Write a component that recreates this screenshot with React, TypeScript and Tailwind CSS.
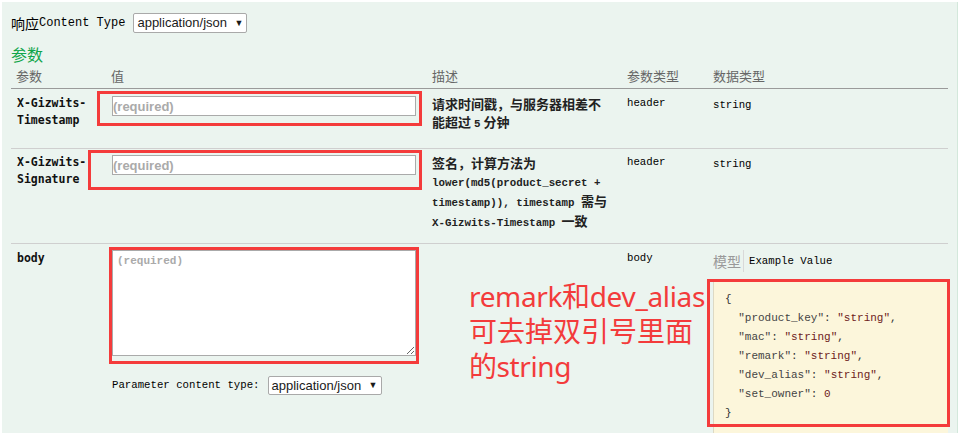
import React from "react";

function Sel({ className }: { className: string }) {
  return (
    <div
      className={
        "flex items-center justify-between border border-[#a9a9a9] bg-white rounded-[2px] pl-[3px] pr-[3px] text-[13px] font-['Liberation_Sans',Arial,sans-serif] text-[#1a1a1a] " +
        className
      }
    >
      <span>application/json</span>
      <span className="text-[9px] leading-none">▼</span>
    </div>
  );
}

function M({ children }: { children: React.ReactNode }) {
  return <span className="font-['Liberation_Mono',monospace] text-[10.8px]">{children}</span>;
}

const mono = "font-['Liberation_Mono',monospace]";
const nameCls =
  "pl-[6px] font-['DejaVu_Sans_Mono',monospace] font-bold text-[11.5px] leading-[17px] text-[#111]";
const descCls =
  "pl-[6px] font-['Noto_Sans_CJK_SC',sans-serif] font-bold text-[13px] leading-[18px] text-[#222] whitespace-nowrap";
const smallMono = "pl-[6px] font-['Liberation_Mono',monospace] text-[10.7px] leading-[17px] text-black";

function Input() {
  return (
    <input
      readOnly
      placeholder="(required)"
      className="block w-[304px] h-[20px] border border-[#aaa] bg-white px-0 text-[13px] font-bold font-['Liberation_Sans',Arial,sans-serif] placeholder:text-[#aaa] outline-none"
    />
  );
}

export default function App() {
  return (
    <div className="relative w-[962px] h-[433px] bg-white overflow-hidden font-['Noto_Sans','Noto_Sans_CJK_SC',sans-serif]">
      <div className="ml-[2px] mt-[2px] w-[956px] h-[431px] bg-[#ebf4ef] border-r border-[#d3e8db] pl-[9px] pt-[11px]">
        {/* response content type */}
        <div className="flex items-center h-[20px] text-black">
          <span className="text-[14px] font-['Noto_Sans_CJK_SC',sans-serif]">响应</span>
          <span className={mono + " text-[12px]"}>Content Type</span>
          <Sel className="ml-[8px] w-[114px] h-[20px]" />
        </div>

        <h4 className="mt-[11px] h-[20px] leading-[20px] text-[16px] text-[#10a54a] font-['Noto_Sans_CJK_SC',sans-serif]">
          参数
        </h4>

        <div className="w-[937px]">
          {/* header */}
          <div className="grid grid-cols-[94px_321px_195px_86px_241px] h-[25px] items-center border-b border-[#9a9a9a] text-[13px] text-[#666] font-['Noto_Sans_CJK_SC',sans-serif]">
            <div className="pl-[5px]">参数</div>
            <div className="pl-[6px]">值</div>
            <div className="pl-[6px]">描述</div>
            <div className="pl-[6px]">参数类型</div>
            <div className="pl-[6px]">数据类型</div>
          </div>

          {/* row 1 */}
          <div className="grid grid-cols-[94px_321px_195px_86px_241px] h-[60px] border-b border-[#cfcfcf] pt-[6px]">
            <div className={nameCls}>
              X-Gizwits-
              <br />
              Timestamp
            </div>
            <div className="pl-[7px] pt-px">
              <Input />
            </div>
            <div className={descCls}>
              <div>请求时间戳，与服务器相差不</div>
              <div>
                能超过 <M>5</M> 分钟
              </div>
            </div>
            <div className={smallMono}>header</div>
            <div className={smallMono + " pt-[2px]"}>string</div>
          </div>

          {/* row 2 */}
          <div className="grid grid-cols-[94px_321px_195px_86px_241px] h-[95px] border-b border-[#cfcfcf] pt-[5px]">
            <div className={nameCls}>
              X-Gizwits-
              <br />
              Signature
            </div>
            <div className="pl-[7px] pt-px">
              <Input />
            </div>
            <div className={descCls}>
              <div>签名，计算方法为</div>
              <div>
                <M>lower(md5(product_secret +</M>
              </div>
              <div>
                <M>timestamp)), timestamp </M>需与
              </div>
              <div>
                <M>X-Gizwits-Timestamp </M>一致
              </div>
            </div>
            <div className={smallMono}>header</div>
            <div className={smallMono + " pt-[2px]"}>string</div>
          </div>

          {/* row 3 */}
          <div className="grid grid-cols-[94px_321px_195px_86px_241px] h-[200px] pt-[6px]">
            <div className={nameCls}>body</div>
            <div className="pl-[7px]">
              <textarea
                readOnly
                placeholder="(required)"
                className="block w-[304px] h-[106px] border border-[#aaa] bg-white pl-[4px] pt-[3px] text-[11px] leading-[14px] font-bold font-['Liberation_Mono',monospace] placeholder:text-[#aaa] outline-none"
              />
              <div className="mt-[20px] flex items-center h-[19px]">
                <span className={mono + " text-[10.7px] text-black"}>Parameter content type:</span>
                <Sel className="ml-[8px] w-[114px] h-[19px]" />
              </div>
            </div>
            <div />
            <div className={smallMono}>body</div>
            <div className="pl-[6px]">
              <div className="flex items-stretch h-[22px]">
                <span className="pr-[2px] border-r border-[#d9d9d9] text-[14px] leading-[22px] text-[#999] font-['Noto_Sans_CJK_SC',sans-serif]">
                  模型
                </span>
                <span className={mono + " pl-[5px] text-[10.7px] leading-[22px] text-black"}>Example Value</span>
              </div>
              <div className="mt-[9px] w-[235px] h-[170px] bg-[#fcf6db] border-l border-[#ddd9c4] pl-[11px] pt-[9px]">
                <pre className={mono + " text-[11px] leading-[19px] text-[#333] whitespace-pre"}>
                  {"{\n"}
                  {"  "}
                  <span className="text-[#444]">"product_key"</span>: <span className="text-[#6e1c1c]">"string"</span>,{"\n"}
                  {"  "}
                  <span className="text-[#444]">"mac"</span>: <span className="text-[#6e1c1c]">"string"</span>,{"\n"}
                  {"  "}
                  <span className="text-[#444]">"remark"</span>: <span className="text-[#6e1c1c]">"string"</span>,{"\n"}
                  {"  "}
                  <span className="text-[#444]">"dev_alias"</span>: <span className="text-[#6e1c1c]">"string"</span>,{"\n"}
                  {"  "}
                  <span className="text-[#444]">"set_owner"</span>: <span className="text-[#6e1c1c]">0</span>
                  {"\n}"}
                </pre>
              </div>
            </div>
          </div>
        </div>
      </div>

      {/* annotation overlays */}
      <div className="pointer-events-none absolute left-[97px] top-[91px] w-[325px] h-[35px] border-[3px] border-[#f43b3b]" />
      <div className="pointer-events-none absolute left-[88px] top-[150px] w-[334px] h-[40px] border-[3px] border-[#f43b3b]" />
      <div className="pointer-events-none absolute left-[109px] top-[247px] w-[310px] h-[117px] border-[3px] border-[#f43b3b]" />
      <div className="pointer-events-none absolute left-[707px] top-[279px] w-[243px] h-[148px] border-[3px] border-[#f43b3b]" />
      <div className="pointer-events-none absolute left-[469px] top-[279px] text-[28px] leading-[35px] text-[#f33b3b] font-['Noto_Sans','Noto_Sans_CJK_SC',sans-serif] whitespace-nowrap">
        <div className="tracking-[-0.35px]">remark和dev_alias</div>
        <div>可去掉双引号里面</div>
        <div className="tracking-[-0.4px]">的string</div>
      </div>
    </div>
  );
}
